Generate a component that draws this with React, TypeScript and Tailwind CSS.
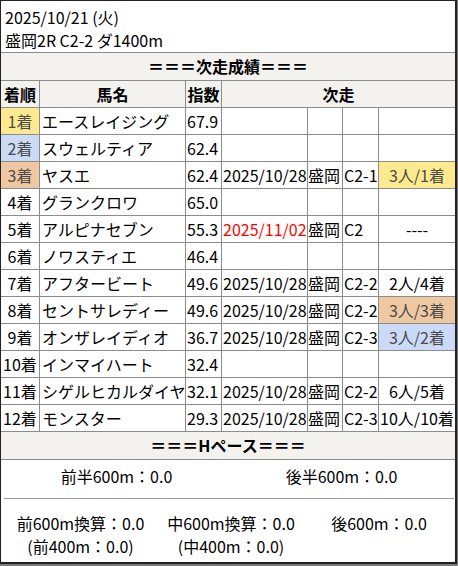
import React from 'react';

type Row = {
  rank: string;
  name: string;
  idx: string;
  rankBg?: string;
  date?: string;
  red?: boolean;
  place?: string;
  cls?: string;
  res?: string;
  resBg?: string;
};

const YELLOW = 'bg-[#fdea8e] text-[#4a4a4a]';
const BLUE = 'bg-[#cbdbf7] text-[#4a4a4a]';
const PEACH = 'bg-[#efc8a2] text-[#4a4a4a]';

const rows: Row[] = [
  { rank: '1着', name: 'エースレイジング', idx: '67.9', rankBg: YELLOW },
  { rank: '2着', name: 'スウェルティア', idx: '62.4', rankBg: BLUE },
  { rank: '3着', name: 'ヤスエ', idx: '62.4', rankBg: PEACH, date: '2025/10/28', place: '盛岡', cls: 'C2-1', res: '3人/1着', resBg: YELLOW },
  { rank: '4着', name: 'グランクロワ', idx: '65.0' },
  { rank: '5着', name: 'アルピナセブン', idx: '55.3', date: '2025/11/02', red: true, place: '盛岡', cls: 'C2', res: '----' },
  { rank: '6着', name: 'ノワスティエ', idx: '46.4' },
  { rank: '7着', name: 'アフタービート', idx: '49.6', date: '2025/10/28', place: '盛岡', cls: 'C2-2', res: '2人/4着' },
  { rank: '8着', name: 'セントサレディー', idx: '49.6', date: '2025/10/28', place: '盛岡', cls: 'C2-2', res: '3人/3着', resBg: PEACH },
  { rank: '9着', name: 'オンザレイディオ', idx: '36.7', date: '2025/10/28', place: '盛岡', cls: 'C2-3', res: '3人/2着', resBg: BLUE },
  { rank: '10着', name: 'インマイハート', idx: '32.4' },
  { rank: '11着', name: 'シゲルヒカルダイヤ', idx: '32.1', date: '2025/10/28', place: '盛岡', cls: 'C2-2', res: '6人/5着' },
  { rank: '12着', name: 'モンスター', idx: '29.3', date: '2025/10/28', place: '盛岡', cls: 'C2-3', res: '10人/10着' },
];

const grid = 'grid grid-cols-[38px_145px_35px_85px_34px_35px_76px] gap-x-px';
const cell = 'h-[26px] leading-[26px] whitespace-nowrap overflow-hidden';

export default function App() {
  return (
    <div className="h-[566px] w-[458px] bg-[#7c7c7c] font-['Noto_Sans_CJK_JP','Noto_Sans',sans-serif] text-[16px] text-black">
      <div className="flex h-[564px] w-[457px] flex-col gap-y-px border-t border-l border-r-2 border-b-2 border-[#222] bg-[#8c8c8c]">
        <div className="h-[51px] bg-white pl-[4px] pt-[5px] leading-[23px]">
          <div>2025/10/21 (火)</div>
          <div>盛岡2R C2-2 ダ1400m</div>
        </div>

        <div className="h-[27px] bg-[#f3f2ee] text-center font-bold leading-[27px]">＝＝＝次走成績＝＝＝</div>

        <div className={grid}>
          <div className={`${cell} bg-[#f3f2ee] text-center font-bold`}>着順</div>
          <div className={`${cell} bg-[#f3f2ee] text-center font-bold`}>馬名</div>
          <div className={`${cell} bg-[#f3f2ee] text-center font-bold`}>指数</div>
          <div className={`${cell} col-span-4 bg-[#f3f2ee] text-center font-bold`}>次走</div>
        </div>

        {rows.map((r) => (
          <div key={r.rank} className={grid}>
            <div className={`${cell} text-center ${r.rankBg ?? 'bg-white'}`}>{r.rank}</div>
            <div className={`${cell} bg-white pl-[2px]`}>{r.name}</div>
            <div className={`${cell} bg-white pl-[1px]`}>{r.idx}</div>
            <div className={`${cell} bg-white pl-[1px] ${r.red ? 'text-[#ff0000]' : ''}`}>{r.date}</div>
            <div className={`${cell} bg-white`}>{r.place}</div>
            <div className={`${cell} bg-white pl-[1px]`}>{r.cls}</div>
            <div className={`${cell} text-center ${r.resBg ?? 'bg-white'}`}>{r.res}</div>
          </div>
        ))}

        <div className="h-[27px] bg-[#f3f2ee] text-center font-bold leading-[27px]">＝＝＝Hペース＝＝＝</div>

        <div className="flex-1 bg-white pl-[3px] pr-[1px]">
          <div className="grid h-[38px] grid-cols-2 pt-[5px] text-center leading-[23px]">
            <div>前半600m：0.0</div>
            <div>後半600m：0.0</div>
          </div>
          <div className="border-t border-[#999]" />
          <div className="grid grid-cols-[153px_148px_148px] pt-[13px] text-center leading-[23px]">
            <div>
              <div>前600m換算：0.0</div>
              <div>(前400m：0.0)</div>
            </div>
            <div>
              <div>中600m換算：0.0</div>
              <div>(中400m：0.0)</div>
            </div>
            <div>
              <div>後600m：0.0</div>
            </div>
          </div>
        </div>
      </div>
    </div>
  );
}
